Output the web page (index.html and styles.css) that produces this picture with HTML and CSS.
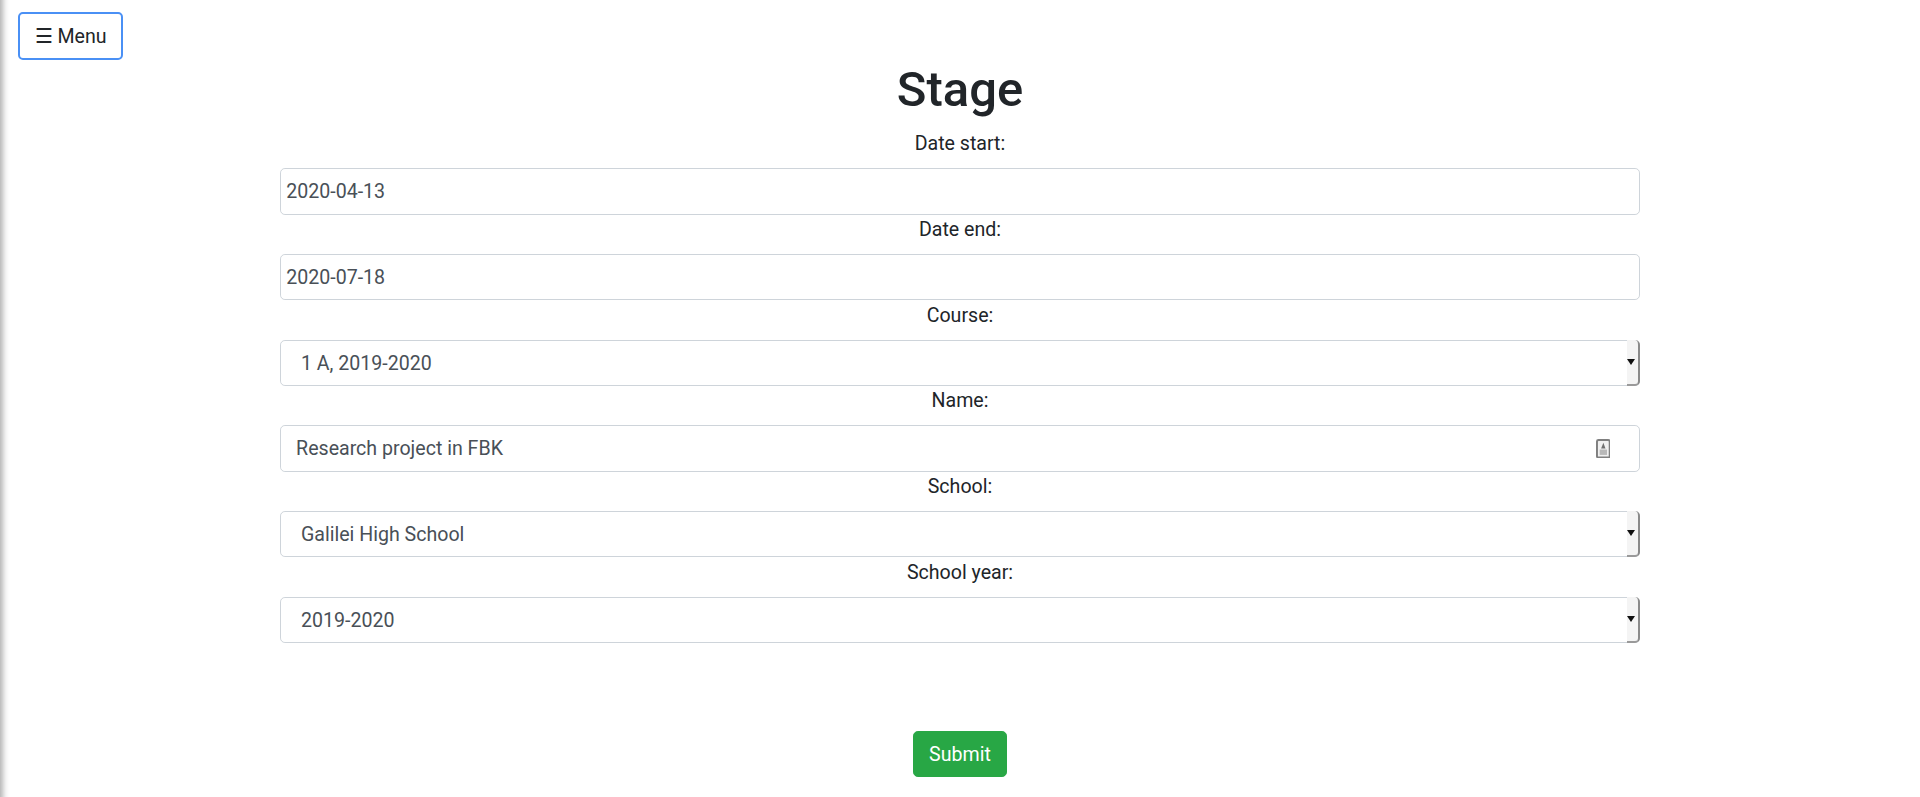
FILE: index.html
```html
<!DOCTYPE html>
<html lang="en">
<head>
<meta charset="utf-8">
<title>Stage</title>
<link rel="stylesheet" href="styles.css">
</head>
<body>
<div class="sidebar-edge"></div>
<button class="menu-btn" type="button">☰ Menu</button>
<main class="page">
  <h1 class="title">Stage</h1>
  <form class="form">
    <label class="field-label" for="ds">Date start:</label>
    <input class="control plain" id="ds" type="text" value="2020-04-13">
    <label class="field-label" for="de">Date end:</label>
    <input class="control plain" id="de" type="text" value="2020-07-18">
    <label class="field-label" for="co">Course:</label>
    <div class="select-wrap">
      <select class="control select" id="co"><option>1 A, 2019-2020</option></select>
      <span class="select-arrow"></span>
    </div>
    <label class="field-label" for="na">Name:</label>
    <div class="name-wrap">
      <input class="control named" id="na" type="text" value="Research project in FBK">
      <svg class="contact-icon" viewBox="0 0 12 16" width="12" height="16" aria-hidden="true">
        <rect x="0.8" y="0.8" width="10.4" height="14.4" rx="1.2" fill="#f0f0f0" stroke="#7f7f7f" stroke-width="1.6"/>
        <path d="M6 3 4.2 7.8h3.6z" fill="#6f6f6f"/>
        <rect x="3" y="8.6" width="6" height="4.4" fill="#b8b8b8"/>
      </svg>
    </div>
    <label class="field-label" for="sc">School:</label>
    <div class="select-wrap">
      <select class="control select" id="sc"><option>Galilei High School</option></select>
      <span class="select-arrow"></span>
    </div>
    <label class="field-label" for="sy">School year:</label>
    <div class="select-wrap">
      <select class="control select" id="sy"><option>2019-2020</option></select>
      <span class="select-arrow"></span>
    </div>
    <button class="submit-btn" type="submit">Submit</button>
  </form>
</main>
</body>
</html>
```
FILE: styles.css
```css
* { box-sizing: border-box; }
html { zoom: 1.2245; }
html, body { margin: 0; }
body {
  position: relative;
  height: 651px;
  overflow: hidden;
  background: #fff;
  color: #212529;
  font-family: Roboto, "Liberation Sans", sans-serif;
  font-size: 16px;
  line-height: 1.5;
}
.sidebar-edge {
  position: absolute;
  left: -6px; top: -10px; bottom: -10px;
  width: 6px;
  box-shadow: 1.5px 0 6px rgba(0,0,0,.42);
}
.menu-btn {
  position: absolute;
  left: 15px; top: 10px;
  height: 38.6px;
  padding: 1px 11.7px 0;
  background: #fff;
  border: 2px solid #4a90f5;
  border-radius: 4px;
  color: #212529;
  font: inherit;
}
.page { width: 1140px; margin: 0 auto; padding: 49.4px 15px 0; }
.title { margin: 0 0 7.7px; padding-top: 0.3px; font-size: 40px; font-weight: 500; line-height: 1.2; text-align: center; }
.form { display: flex; flex-direction: column; align-items: center; }
.field-label { display: block; padding-top: 0.3px; margin-bottom: 7.7px; text-align: center; }
.control {
  display: block;
  width: 100%;
  height: 38px;
  background: #fff;
  border: 1px solid #ced4da;
  border-radius: 4px;
  color: #495057;
  font: inherit;
  outline: none;
}
.plain { padding: 0.6px 4px 0; }
.named { padding: 0.6px 12px 0; }
.name-wrap, .select-wrap { position: relative; width: 100%; }
.select { appearance: none; -webkit-appearance: none; padding: 0.6px 16px 0; }
.select-arrow {
  position: absolute;
  right: 0; top: 0; bottom: 0;
  width: 10.5px;
  background: #f4f4f4;
  border-right: 2px solid #8a8a8a;
  border-bottom: 2px solid #9a9a9a;
  border-radius: 0 4px 4px 0;
}
.select-arrow::after {
  content: "";
  position: absolute;
  left: 0.5px; top: 15.5px;
  border-left: 4px solid transparent;
  border-right: 4px solid transparent;
  border-top: 5px solid #111;
}
.contact-icon { position: absolute; right: 24px; top: 11px; }
.submit-btn {
  margin-top: 71.9px;
  height: 37.7px;
  padding: 0 12px;
  background: #28a745;
  border: 1px solid #28a745;
  border-radius: 4px;
  color: #fff;
  font: inherit;
}
```
